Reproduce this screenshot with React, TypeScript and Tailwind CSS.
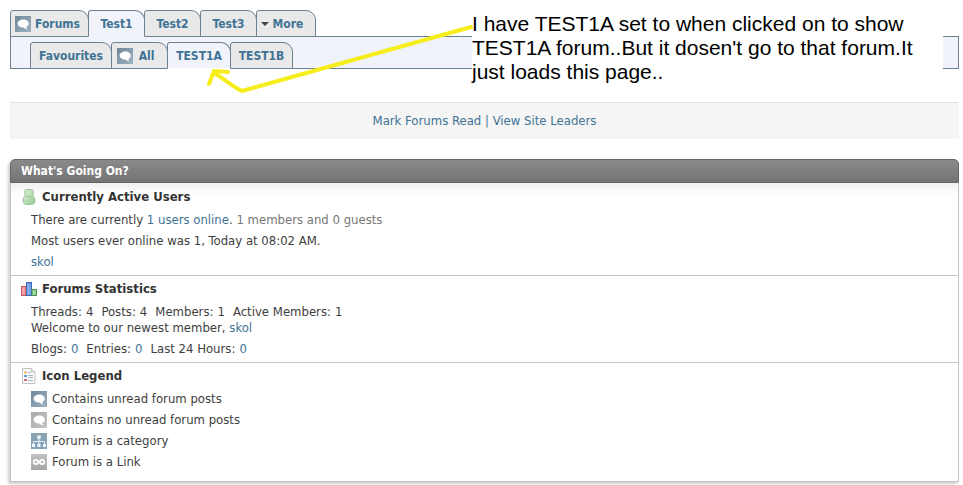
import type { ReactNode } from 'react';
import clsx from 'clsx';

interface TabProps {
  label: string;
  active?: boolean;
  icon?: ReactNode;
  className?: string;
}

function PostIcon({ muted = false }: { muted?: boolean }) {
  const id = muted ? 'post-muted' : 'post-unread';
  return (
    <svg className="w-4 h-4 shrink-0" viewBox="0 0 16 16" aria-hidden="true">
      <defs>
        <linearGradient id={id} x1="0" y1="0" x2="1" y2="1">
          <stop offset="0" stopColor={muted ? '#a8a8a8' : '#6f8798'} />
          <stop offset="1" stopColor={muted ? '#c6c6c6' : '#9db2c1'} />
        </linearGradient>
      </defs>
      <rect width="16" height="16" fill={`url(#${id})`} />
      <path d="M8.300 3.500c3.100 0 5.500 1.700 5.500 4 0 1.600-1 2.900-2.500 3.500.1 1 .5 1.700 1.100 2.400-1.600-.2-2.900-.9-3.700-1.900C5.300 11.600 2.600 10 2.600 7.500c0-2.300 2.500-4 5.700-4z" fill="#fff" />
    </svg>
  );
}

function CategoryIcon() {
  return (
    <svg className="w-4 h-4 shrink-0" viewBox="0 0 16 16" aria-hidden="true">
      <defs>
        <linearGradient id="category" x1="0" y1="0" x2="0" y2="1">
          <stop offset="0" stopColor="#8ba0b0" />
          <stop offset="1" stopColor="#7fa6c0" />
        </linearGradient>
      </defs>
      <rect width="16" height="16" fill="url(#category)" />
      <path d="M8 5v6M2.500 11V8.500h11V11" stroke="#e4eff6" fill="none" />
      <path d="M6.300 2.500h3.400v3.200H6.300zM1 11h3v3H1zM6.500 11h3v3h-3zM12 11h3v3h-3z" fill="#f4fafd" />
    </svg>
  );
}

function LinkIcon() {
  return (
    <svg className="w-4 h-4 shrink-0" viewBox="0 0 16 16" aria-hidden="true">
      <defs>
        <linearGradient id="link" x1="0" y1="0" x2="0" y2="1">
          <stop offset="0" stopColor="#c2c2c2" />
          <stop offset="1" stopColor="#a6a6a6" />
        </linearGradient>
      </defs>
      <rect width="16" height="16" fill="url(#link)" />
      <circle cx="4.900" cy="8" r="2.200" fill="none" stroke="#fff" strokeWidth="1.700" />
      <circle cx="11.100" cy="8" r="2.200" fill="none" stroke="#fff" strokeWidth="1.700" />
      <path d="M6.500 8h3" stroke="#fff" strokeWidth="1.500" />
    </svg>
  );
}

function UserIcon() {
  return (
    <svg className="w-4 h-4 shrink-0" viewBox="0 0 16 16" aria-hidden="true">
      <defs>
        <linearGradient id="user" x1="0" y1="0" x2="1" y2="1">
          <stop offset="0" stopColor="#e0f3d9" />
          <stop offset="1" stopColor="#93cb90" />
        </linearGradient>
      </defs>
      <path
        d="M5.500.6h5c1.200 0 1.700.8 1.700 2v2.200c0 .9-.2 1.400-.6 2 1.500.8 2.300 2.200 2.300 4.200v1.500c0 2-1.600 3-5.900 3s-5.900-1-5.900-3V11c0-2 .8-3.400 2.300-4.200-.4-.6-.6-1.100-.6-2V2.600c0-1.200.5-2 1.700-2z"
        fill="url(#user)"
        stroke="#8fb890"
        strokeWidth=".9"
      />
      <path d="M4.700 7c1.900 1 4.700 1 6.600 0" fill="none" stroke="#8fb890" strokeWidth=".7" />
    </svg>
  );
}

function StatsIcon() {
  return (
    <svg className="w-4 h-4 shrink-0" viewBox="0 0 16 16" aria-hidden="true">
      <rect x=".5" y="5.500" width="4.500" height="9" fill="#f2979c" stroke="#c9525c" />
      <rect x="5.500" y="1.500" width="5" height="13" fill="#6f9fe6" stroke="#3f68b4" />
      <rect x="11" y="8.500" width="4.500" height="6" fill="#93d294" stroke="#4b9456" />
      <path d="M2 7v6.500M7.200 3v10.500M12.700 10v3.500" stroke="#fff" strokeOpacity=".35" />
    </svg>
  );
}

function LegendIcon() {
  return (
    <svg className="w-4 h-4 shrink-0" viewBox="0 0 16 16" aria-hidden="true">
      <path d="M1.500.5h9l3.500 3.500v11.500H1.500z" fill="#fafafa" stroke="#c6c0c0" />
      <path d="M10.500.5V4H14" fill="#e8e8e8" stroke="#c6c0c0" />
      <path d="M3 3.500h3v2H3z" fill="#eebb5c" />
      <path d="M3 7h3v2H3z" fill="#5b9fd0" />
      <path d="M3 11h3v2H3z" fill="#d2688a" />
      <path d="M7 4.500h3M7 7.500h5M7 9.500h5M7 12.500h5" stroke="#a9b8c4" />
    </svg>
  );
}

function Tab({ label, active, icon, className }: TabProps) {
  return (
    <a
      href="#"
      className={clsx(
        'flex items-center justify-center h-[27px] -mb-px -mr-px border rounded-tl-[3px] rounded-tr-[10px] text-[12px] font-bold whitespace-nowrap border-[#6b8093] text-[#417394]',
        active ? 'bg-[#f0f4fa] border-b-[#f0f4fa]' : 'bg-[#e9e9e9]',
        className,
      )}
    >
      {icon}
      {label}
    </a>
  );
}

function Link({ children }: { children: ReactNode }) {
  return (
    <a href="#" className="text-[#417394] hover:underline">
      {children}
    </a>
  );
}

function Block({ title, icon, children }: { title: string; icon: ReactNode; children: ReactNode }) {
  return (
    <section className="border-t border-[#c4c4c4] first:border-t-0 px-2.5 pt-[3px] first:pt-1 pb-[3px]">
      <h3 className="flex items-center gap-[5px] h-5 font-bold text-[#333]">
        {icon}
        {title}
      </h3>
      <div className="pl-2.5 pt-[5px] pb-0.5">{children}</div>
    </section>
  );
}

const legend = [
  { icon: <PostIcon />, label: 'Contains unread forum posts' },
  { icon: <PostIcon muted />, label: 'Contains no unread forum posts' },
  { icon: <CategoryIcon />, label: 'Forum is a category' },
  { icon: <LinkIcon />, label: 'Forum is a Link' },
];

const stats = [
  { label: 'Threads', value: 4 },
  { label: 'Posts', value: 4 },
  { label: 'Members', value: 1 },
  { label: 'Active Members', value: 1 },
];

const blogStats = [
  { label: 'Blogs', value: 0 },
  { label: 'Entries', value: 0 },
  { label: 'Last 24 Hours', value: 0 },
];

export default function App() {
  return (
    <div className="relative bg-white pl-2.5 pr-1 pt-2.5 pb-1 text-[13px] leading-4 text-[#3e3e3e] font-['DejaVu_Sans_Condensed','Tahoma','DejaVu_Sans',sans-serif]">
      <nav>
        <div className="flex">
          <Tab label="Forums" icon={<PostIcon />} className="w-[79px] gap-1 pr-1" />
          <Tab label="Test1" active className="w-[57px] relative" />
          <Tab label="Test2" className="w-[57px]" />
          <Tab label="Test3" className="w-[57px]" />
          <Tab
            label="More"
            className="w-[60px] gap-1 pr-2"
            icon={
              <svg className="w-2 h-2" viewBox="0 0 8 8" aria-hidden="true">
                <path d="M0 2h8L4 6z" fill="#444" />
              </svg>
            }
          />
        </div>
        <div className="flex border border-[#6b8093] bg-[#f0f4fa] pl-[19px] pt-[5px]">
          <Tab label="Favourites" className="w-[82px]" />
          <Tab label="All" icon={<PostIcon />} className="w-[57px] gap-1.5 pr-2" />
          <Tab label="TEST1A" active className="w-[64px] border-b-white relative" />
          <Tab label="TEST1B" className="w-[63px]" />
        </div>
      </nav>

      <div className="mt-[33px] border-t border-[#e3e3e3] bg-[#f5f5f5] py-2.5 text-center text-[#417394]">
        <Link>Mark Forums Read</Link> | <Link>View Site Leaders</Link>
      </div>

      <main className="mt-5 rounded-t-[5px] shadow-[-2px_2px_3px_#d0d0d0]">
        <h2 className="h-6 flex items-center px-2.5 rounded-t-[5px] border border-[#666] bg-linear-to-b from-[#8a8a8a] to-[#747474] text-[12px] font-bold text-white">
          What's Going On?
        </h2>
        <div className="border border-t-0 border-[#c4c4c4] bg-white bg-linear-to-b from-[#f0f0f0] to-white to-[12px] pb-1.5">
          <Block title="Currently Active Users" icon={<UserIcon />}>
            <div className="space-y-[5px]">
              <p>
                There are currently <Link>1 users online</Link>. <span className="text-[#777]">1 members and 0 guests</span>
              </p>
              <p>Most users ever online was 1, Today at 08:02 AM.</p>
              <p>
                <Link>skol</Link>
              </p>
            </div>
          </Block>

          <Block title="Forums Statistics" icon={<StatsIcon />}>
            <dl className="flex gap-2">
              {stats.map((item) => (
                <div key={item.label} className="flex gap-1">
                  <dt>{item.label}:</dt>
                  <dd>{item.value}</dd>
                </div>
              ))}
            </dl>
            <p>
              Welcome to our newest member, <Link>skol</Link>
            </p>
            <dl className="flex gap-2 pt-[5px]">
              {blogStats.map((item) => (
                <div key={item.label} className="flex gap-1">
                  <dt>{item.label}:</dt>
                  <dd className="text-[#417394]">{item.value}</dd>
                </div>
              ))}
            </dl>
          </Block>

          <Block title="Icon Legend" icon={<LegendIcon />}>
            <ul className="space-y-[5px]">
              {legend.map((item) => (
                <li key={item.label} className="flex items-center gap-[5px]">
                  {item.icon}
                  {item.label}
                </li>
              ))}
            </ul>
          </Block>
        </div>
      </main>

      {/* note pinned over the page */}
      <p className="absolute top-3 left-[472px] w-[471px] bg-white text-black text-[21px] leading-6 font-['Liberation_Sans',Arial,sans-serif]">
        I have TEST1A set to when clicked on to show TEST1A forum..But it dosen't go to that forum.It just loads this page..
      </p>
      <svg
        className="absolute top-5 left-[200px] w-[274px] h-[80px] pointer-events-none"
        viewBox="0 0 274 80"
        fill="none"
        stroke="#f6ed1c"
        strokeWidth="4"
        strokeLinecap="round"
        strokeLinejoin="round"
        aria-hidden="true"
      >
        <path d="M271 7 42 71 C33 67 26 60 14 53M9 64 14 51 28 52" />
      </svg>
    </div>
  );
}
